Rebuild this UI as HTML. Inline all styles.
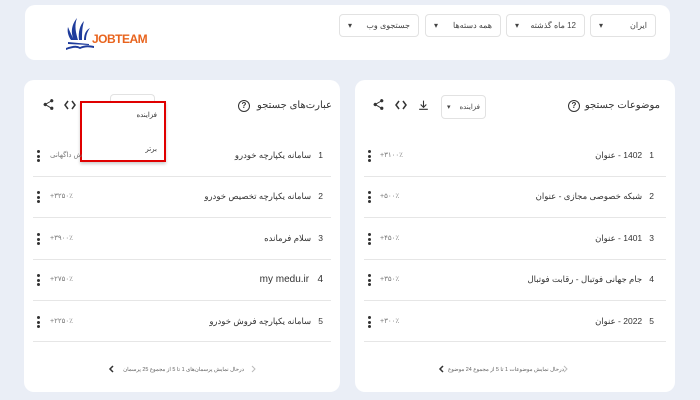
<!DOCTYPE html>
<html><head><meta charset="utf-8"><style>
*{margin:0;padding:0;box-sizing:border-box}
body{width:700px;height:400px;background:#eaeef6;font-family:"Liberation Sans","Noto Sans CJK SC",sans-serif;position:relative;overflow:hidden;color:#333}
.a{position:absolute}
.card{position:absolute;background:#fff;border-radius:10px}
.sel{position:absolute;top:14px;height:23px;border:1px solid #e2e2e2;border-radius:4px;font-size:8px;color:#444;display:flex;align-items:center;justify-content:space-between;padding:0 8px;direction:rtl}
.t{font-size:8.5px;color:#333;direction:rtl;white-space:nowrap}
.line{position:absolute;height:1px;background:#e6e6e6}
.dots{position:absolute;width:3px}
.dots i{display:block;width:3px;height:3px;background:#333;border-radius:50%;margin-bottom:1.5px}
.pct{font-size:7px;color:#777}
.ft{font-size:5.4px;color:#666;direction:rtl;white-space:nowrap}
</style></head><body>
<div class="card" style="left:25px;top:5px;width:645px;height:55px"></div>
<div class="sel" style="left:590px;width:66px"><span>ایران</span><span>▾</span></div>
<div class="sel" style="left:506px;width:79px"><span>12 ماه گذشته</span><span>▾</span></div>
<div class="sel" style="left:425px;width:76px"><span>همه دسته‌ها</span><span>▾</span></div>
<div class="sel" style="left:339px;width:80px"><span>جستجوی وب</span><span>▾</span></div>
<svg class="a" style="left:64px;top:16px" width="30" height="36" viewBox="0 0 30 36"><path d="M10 24 C6 16 8 8 13 2 C10 10 12 17 14 24Z M15 24 C14 16 16 9 20 5 C18 12 18 18 18 24Z M7 24 C4 20 3 15 4 11 C6 16 8 20 10 24Z M20 24 C20 18 22 14 26 12 C23 16 22 20 22 24Z" fill="#1f3c9c"/><path d="M2 32 Q12 28 16 31 Q22 28 30 30 L30 32 Q22 30 16 33 Q12 30 2 34Z M4 26 L25 28 L25 29 L4 28Z" fill="#1f3c9c"/></svg>
<div class="a" style="left:92px;top:32px;font-size:12px;font-weight:bold;color:#e8641e;letter-spacing:-0.5px">JOBTEAM</div>

<div class="card" style="left:24px;top:80px;width:316px;height:312px"></div>
<div class="card" style="left:355px;top:80px;width:320px;height:312px"></div>

<div class="a t" style="right:368px;top:100px;font-size:10px">عبارت‌های جستجو</div>
<div class="a" style="left:238px;top:100px;width:12px;height:12px;border:1.3px solid #333;border-radius:50%;font-size:8px;text-align:center;line-height:10px;font-weight:bold">?</div>
<svg class="a" style="left:64px;top:100px" width="12" height="10" viewBox="0 0 12 10"><path d="M4 1 L1 5 L4 9 M8 1 L11 5 L8 9" stroke="#333" stroke-width="1.5" fill="none"/></svg>
<svg class="a" style="left:42px;top:98px" width="13" height="13" viewBox="0 0 24 24"><path d="M18 16a3 3 0 0 0-2 .8L8.9 12.7a3 3 0 0 0 0-1.4L16 7.2A3 3 0 1 0 15 5a3 3 0 0 0 .1.7L8 9.8a3 3 0 1 0 0 4.4l7.1 4.2a3 3 0 1 0 2.9-2.4z" fill="#333"/></svg>
<div class="a" style="left:110px;top:94px;width:45px;height:12px;border:1px solid #e2e2e2;border-radius:4px;border-bottom:none"></div>
<div class="a" style="left:80px;top:101px;width:86px;height:61px;background:#fff;border:2px solid #e00000;box-shadow:0 2px 3px rgba(0,0,0,.2)"></div>
<div class="a t" style="right:543px;top:111px;font-size:7px">فزاینده</div>
<div class="a t" style="right:543px;top:145px;font-size:7px">برتر</div>
<div class="a pct" style="left:50px;top:151px">ش داگهانی</div>

<div class="a t" style="right:40px;top:100px;font-size:10px">موضوعات جستجو</div>
<div class="a" style="left:568px;top:100px;width:12px;height:12px;border:1.3px solid #333;border-radius:50%;font-size:8px;text-align:center;line-height:10px;font-weight:bold">?</div>
<div class="sel" style="left:441px;top:95px;width:45px;height:24px;font-size:7px;padding:0 5px"><span>فزاینده</span><span>▾</span></div>
<svg class="a" style="left:417px;top:99px" width="13" height="13" viewBox="0 0 24 24"><path d="M11 3h2v10l3.5-3.5 1.4 1.4L12 16.8 6.1 10.9l1.4-1.4L11 13zM4 18h16v2H4z" fill="#333"/></svg>
<svg class="a" style="left:395px;top:100px" width="12" height="10" viewBox="0 0 12 10"><path d="M4 1 L1 5 L4 9 M8 1 L11 5 L8 9" stroke="#333" stroke-width="1.5" fill="none"/></svg>
<svg class="a" style="left:372px;top:98px" width="13" height="13" viewBox="0 0 24 24"><path d="M18 16a3 3 0 0 0-2 .8L8.9 12.7a3 3 0 0 0 0-1.4L16 7.2A3 3 0 1 0 15 5a3 3 0 0 0 .1.7L8 9.8a3 3 0 1 0 0 4.4l7.1 4.2a3 3 0 1 0 2.9-2.4z" fill="#333"/></svg>

<div class="a t" style="right:377px;top:150px">1&nbsp;&nbsp; سامانه یکپارچه خودرو</div>
<div class="a t" style="right:377px;top:191px">2&nbsp;&nbsp; سامانه یکپارچه تخصیص خودرو</div>
<div class="a t" style="right:377px;top:233px">3&nbsp;&nbsp; سلام فرمانده</div>
<div class="a t" style="right:377px;top:274px;font-size:10px">4&nbsp;&nbsp; my medu.ir</div>
<div class="a t" style="right:377px;top:316px">5&nbsp;&nbsp; سامانه یکپارچه فروش خودرو</div>
<div class="a pct" style="left:50px;top:192px">+۳۲۵۰٪</div>
<div class="a pct" style="left:50px;top:234px">+۳۹۰۰٪</div>
<div class="a pct" style="left:50px;top:275px">+۲۷۵۰٪</div>
<div class="a pct" style="left:50px;top:317px">+۲۲۵۰٪</div>
<div class="line" style="left:33px;top:176px;width:298px"></div>
<div class="line" style="left:33px;top:217px;width:298px"></div>
<div class="line" style="left:33px;top:259px;width:298px"></div>
<div class="line" style="left:33px;top:300px;width:298px"></div>
<div class="line" style="left:33px;top:341px;width:298px"></div>

<div class="a t" style="right:46px;top:150px">1&nbsp;&nbsp; 1402 - عنوان</div>
<div class="a t" style="right:46px;top:191px">2&nbsp;&nbsp; شبکه خصوصی مجازی - عنوان</div>
<div class="a t" style="right:46px;top:233px">3&nbsp;&nbsp; 1401 - عنوان</div>
<div class="a t" style="right:46px;top:274px">4&nbsp;&nbsp; جام جهانی فوتبال - رقابت فوتبال</div>
<div class="a t" style="right:46px;top:316px">5&nbsp;&nbsp; 2022 - عنوان</div>
<div class="a pct" style="left:380px;top:151px">+۳۱۰۰٪</div>
<div class="a pct" style="left:380px;top:192px">+۵۰۰٪</div>
<div class="a pct" style="left:380px;top:234px">+۴۵۰٪</div>
<div class="a pct" style="left:380px;top:275px">+۳۵۰٪</div>
<div class="a pct" style="left:380px;top:317px">+۳۰۰٪</div>
<div class="line" style="left:364px;top:176px;width:302px"></div>
<div class="line" style="left:364px;top:217px;width:302px"></div>
<div class="line" style="left:364px;top:259px;width:302px"></div>
<div class="line" style="left:364px;top:300px;width:302px"></div>
<div class="line" style="left:364px;top:341px;width:302px"></div>

<div class="dots" style="left:37px;top:150px"><i></i><i></i><i></i></div>
<div class="dots" style="left:37px;top:191px"><i></i><i></i><i></i></div>
<div class="dots" style="left:37px;top:233px"><i></i><i></i><i></i></div>
<div class="dots" style="left:37px;top:274px"><i></i><i></i><i></i></div>
<div class="dots" style="left:37px;top:316px"><i></i><i></i><i></i></div>
<div class="dots" style="left:368px;top:150px"><i></i><i></i><i></i></div>
<div class="dots" style="left:368px;top:191px"><i></i><i></i><i></i></div>
<div class="dots" style="left:368px;top:233px"><i></i><i></i><i></i></div>
<div class="dots" style="left:368px;top:274px"><i></i><i></i><i></i></div>
<div class="dots" style="left:368px;top:316px"><i></i><i></i><i></i></div>

<svg class="a" style="left:108px;top:365px" width="6" height="8" viewBox="0 0 6 8"><path d="M5 1 L2 4 L5 7" stroke="#333" stroke-width="1.5" fill="none"/></svg>
<div class="a ft" style="right:456px;top:367px">درحال نمایش پرسمان‌های 1 تا 5 از مجموع 25 پرسمان</div>
<svg class="a" style="left:251px;top:365px" width="6" height="8" viewBox="0 0 6 8"><path d="M1 1 L4 4 L1 7" stroke="#bbb" stroke-width="1" fill="none"/></svg>
<svg class="a" style="left:438px;top:365px" width="6" height="8" viewBox="0 0 6 8"><path d="M5 1 L2 4 L5 7" stroke="#333" stroke-width="1.5" fill="none"/></svg>
<div class="a ft" style="right:136px;top:367px">درحال نمایش موضوعات 1 تا 5 از مجموع 24 موضوع</div>
<svg class="a" style="left:563px;top:365px" width="6" height="8" viewBox="0 0 6 8"><path d="M1 1 L4 4 L1 7" stroke="#bbb" stroke-width="1" fill="none"/></svg>
</body></html>
